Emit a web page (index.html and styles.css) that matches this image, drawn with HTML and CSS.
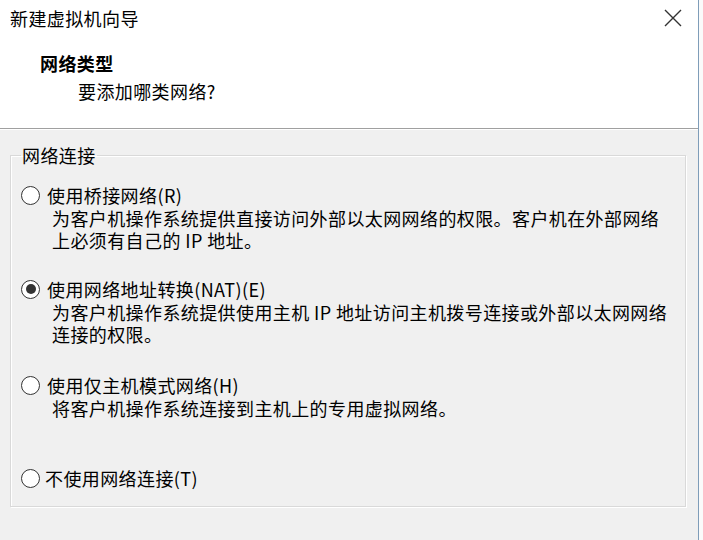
FILE: index.html
```html
<!DOCTYPE html>
<html lang="zh-CN">
<head>
    <meta charset="UTF-8">
    <title>新建虚拟机向导</title>
    <link rel="stylesheet" href="styles.css">
</head>
<body>
    <div class="window">
        <div class="header">
            <div class="titlebar">
                <span class="title">新建虚拟机向导</span>
                <svg class="close" width="18" height="18" viewBox="0 0 18 18">
                    <path d="M1 1 L17 17 M17 1 L1 17" stroke="#333" stroke-width="1.4" fill="none"/>
                </svg>
            </div>
            <div class="heading">网络类型</div>
            <div class="subheading">要添加哪类网络?</div>
        </div>

        <div class="content">
            <fieldset class="group">
                <legend>网络连接</legend>

                <div class="option">
                    <div class="option-row"><span class="radio"></span>使用桥接网络(R)</div>
                    <div class="option-desc">为客户机操作系统提供直接访问外部以太网网络的权限。客户机在外部网络<br>上必须有自己的 IP 地址。</div>
                </div>

                <div class="option">
                    <div class="option-row"><span class="radio checked"></span>使用网络地址转换(NAT)(E)</div>
                    <div class="option-desc">为客户机操作系统提供使用主机 IP 地址访问主机拨号连接或外部以太网网络<br>连接的权限。</div>
                </div>

                <div class="option option-host">
                    <div class="option-row"><span class="radio"></span>使用仅主机模式网络(H)</div>
                    <div class="option-desc">将客户机操作系统连接到主机上的专用虚拟网络。</div>
                </div>

                <div class="option option-none">
                    <div class="option-row tight"><span class="radio"></span>不使用网络连接(T)</div>
                </div>
            </fieldset>
        </div>
    </div>
</body>
</html>
```

FILE: styles.css
```css
html, body {
    margin: 0;
    padding: 0;
    background-color: #fafafa;
}
body {
    font-family: "Noto Sans CJK SC", "Noto Sans", sans-serif;
    font-size: 18px;
    letter-spacing: 0.4px;
    color: #000;
}
.window {
    width: 698px;
    height: 540px;
    border-right: 1px solid #7f9db9;
    background-color: #f0f0f0;
    overflow: hidden;
}
.header {
    height: 128px;
    background-color: #fff;
    border-bottom: 1px solid #a0a0a0;
    box-sizing: border-box;
    height: 129px;
}
.titlebar {
    display: flex;
    justify-content: space-between;
    align-items: center;
    padding: 6px 16px 0 10px;
    line-height: 24px;
}
.close {
    display: block;
}
.heading {
    margin: 21px 0 0 40px;
    line-height: 24px;
    font-weight: 700;
}
.subheading {
    margin: 4px 0 0 78px;
    line-height: 24px;
}
.content {
    border-top: 1px solid #fff;
    padding: 14px 12px 0 10px;
}
.group {
    margin: 0;
    padding: 0 0 17px 10px;
    border: 1px solid #d9d9d9;
    box-shadow: inset 1px 1px 0 #fff, 1px 1px 0 #fff;
}
.group legend {
    padding: 0 1px;
    line-height: 22px;
}
.option {
    margin-top: 27px;
}
.option:first-of-type {
    margin-top: 18px;
}
.option-host {
    margin-top: 29px;
}
.option-none {
    margin-top: 48px;
}
.option-row {
    display: flex;
    align-items: center;
    gap: 7px;
    line-height: 22px;
}
.option-row.tight {
    gap: 5px;
}
.option-desc {
    margin: 1px 0 0 31px;
    line-height: 22px;
}
.radio {
    width: 17px;
    height: 17px;
    border: 1.5px solid #333;
    border-radius: 50%;
    background-color: #fff;
    display: flex;
    align-items: center;
    justify-content: center;
    flex-shrink: 0;
}
.radio.checked::after {
    content: "";
    width: 10px;
    height: 10px;
    border-radius: 50%;
    background-color: #333;
}
```
